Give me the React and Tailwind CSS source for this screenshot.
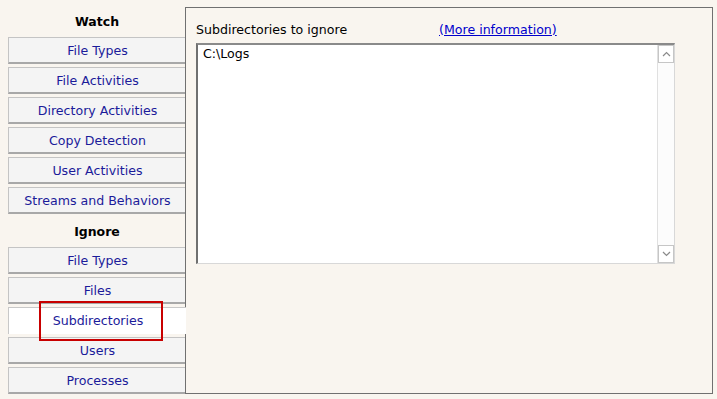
import React from 'react';

const watchItems = ['File Types', 'File Activities', 'Directory Activities', 'Copy Detection', 'User Activities', 'Streams and Behaviors'];
const ignoreItems = ['File Types', 'Files', 'Subdirectories', 'Users', 'Processes'];

const TabButton = ({ label, active }) => (
  <div
    className={`h-[27px] mb-[3px] flex items-center justify-center text-[12.6px] text-[#1b1b9a] ${
      active
        ? 'relative z-10 bg-white border-t border-l border-[#c8c8c8]'
        : 'bg-[#f4f4f4] border-t border-l border-[#c4c4c4] border-b-2 border-b-[#a8a8a8] pt-[2px]'
    }`}
  >
    {active ? (
      <span className="relative pl-[12px] pr-[18px] h-[40px] flex items-center border-2 border-[#c80000] ml-[7px]">{label}</span>
    ) : (
      label
    )}
  </div>
);

const Heading = ({ children }) => (
  <div className="h-[30px] flex items-center justify-center text-[12.5px] font-bold text-black">{children}</div>
);

export default function App() {
  return (
    <div className="w-[717px] h-[399px] bg-[#f9f5ef] flex overflow-hidden" style={{ fontFamily: '"DejaVu Sans", Verdana, sans-serif' }}>
      <div className="w-[186px] pl-2 pt-[7px] shrink-0">
        <Heading>Watch</Heading>
        {watchItems.map(item => <TabButton key={'w' + item} label={item} />)}
        <Heading>Ignore</Heading>
        {ignoreItems.map(item => <TabButton key={'i' + item} label={item} active={item === 'Subdirectories'} />)}
      </div>

      <div className="-ml-px mt-[7px] w-[528px] h-[387px] border border-[#707070] bg-[#f9f5ef] pl-[10px] pt-[14px]">
        <div className="flex h-[16px] items-center text-[12.6px] text-black">
          <span className="w-[243px]">Subdirectories to ignore</span>
          <span className="text-[#0000cc] underline">(More information)</span>
        </div>
        <div className="mt-[5px] w-[479px] h-[221px] bg-white border-t-2 border-l-2 border-t-[#8a8a8a] border-l-[#707070] border-b border-r border-b-[#d8d8d8] border-r-[#d8d8d8] flex">
          <div className="flex-1 pl-[5px] pt-[1px] text-[12.6px] text-black leading-[16px]">C:\Logs</div>
          <div className="w-[17px] flex flex-col bg-[#fcfcfc] border-l border-[#e0e0e0]">
            <div className="h-[18px] border border-[#c6c6c6] bg-white flex items-center justify-center">
              <svg width="9" height="6" viewBox="0 0 9 6"><path d="M1 5 L4.5 1.5 L8 5" fill="none" stroke="#8a8a8a" strokeWidth="1.2" /></svg>
            </div>
            <div className="flex-1" />
            <div className="h-[18px] border border-[#c6c6c6] bg-white flex items-center justify-center">
              <svg width="9" height="6" viewBox="0 0 9 6"><path d="M1 1 L4.5 4.5 L8 1" fill="none" stroke="#8a8a8a" strokeWidth="1.2" /></svg>
            </div>
          </div>
        </div>
      </div>
    </div>
  );
}
